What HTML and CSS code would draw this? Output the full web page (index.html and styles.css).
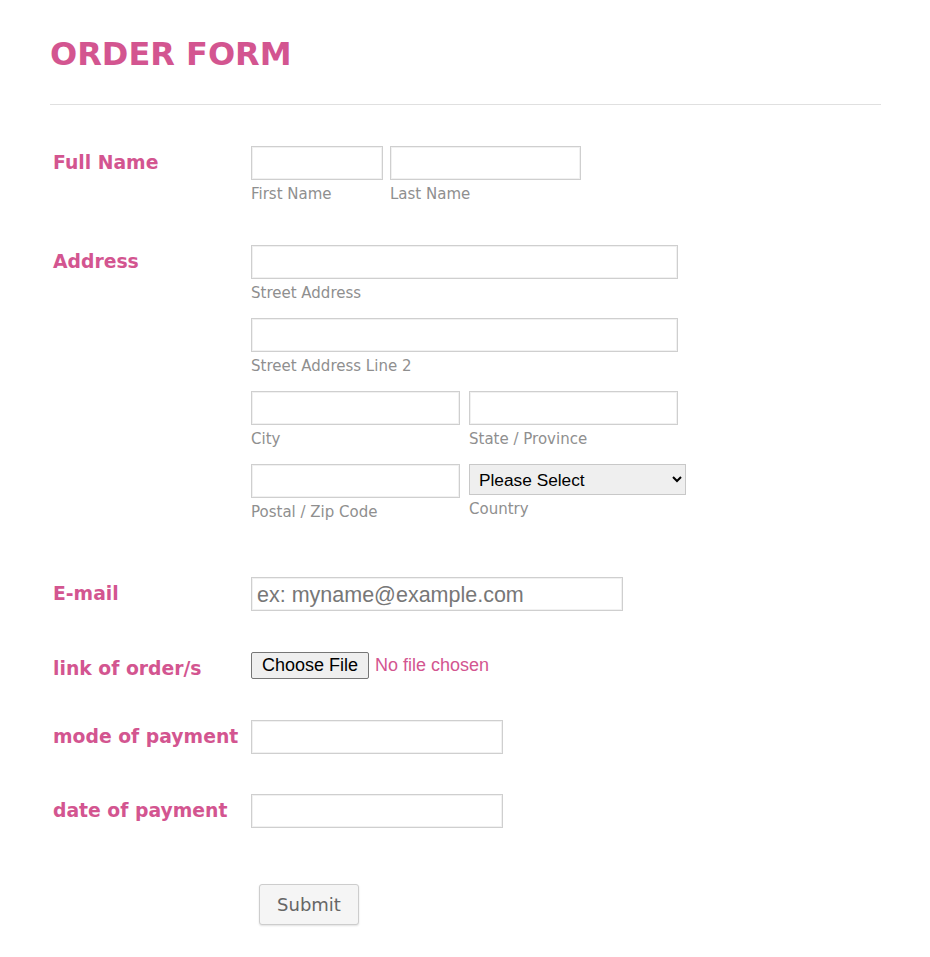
FILE: index.html
```html
<!DOCTYPE html>
<html lang="en">
<head>
  <meta charset="UTF-8" />
  <title>Order Form</title>
  <link rel="stylesheet" href="styles.css">
</head>
<body>
  <form class="form-all">
    <h1 class="form-header">ORDER FORM</h1>
    <hr class="form-divider">

    <div class="form-line name-line">
      <label class="form-label">Full Name</label>
      <div class="form-input">
        <div class="field-row">
          <span class="field">
            <input type="text" class="w-first">
            <span class="sublabel">First Name</span>
          </span>
          <span class="field">
            <input type="text" class="w-last">
            <span class="sublabel">Last Name</span>
          </span>
        </div>
      </div>
    </div>

    <div class="form-line">
      <label class="form-label">Address</label>
      <div class="form-input">
        <div class="field stacked">
          <input type="text" class="w-street">
          <span class="sublabel">Street Address</span>
        </div>
        <div class="field stacked">
          <input type="text" class="w-street">
          <span class="sublabel">Street Address Line 2</span>
        </div>
        <div class="field-row wide">
          <span class="field stacked">
            <input type="text" class="w-half">
            <span class="sublabel">City</span>
          </span>
          <span class="field stacked">
            <input type="text" class="w-half">
            <span class="sublabel">State / Province</span>
          </span>
        </div>
        <div class="field-row wide">
          <span class="field stacked">
            <input type="text" class="w-half">
            <span class="sublabel">Postal / Zip Code</span>
          </span>
          <span class="field stacked">
            <select class="country">
              <option>Please Select</option>
            </select>
            <span class="sublabel">Country</span>
          </span>
        </div>
      </div>
    </div>

    <div class="form-line email-line">
      <label class="form-label">E-mail</label>
      <div class="form-input">
        <input type="email" class="w-email" placeholder="ex: myname@example.com">
      </div>
    </div>

    <div class="form-line file-line">
      <label class="form-label">link of order/s</label>
      <div class="form-input">
        <input type="file" class="file-input">
      </div>
    </div>

    <div class="form-line">
      <label class="form-label">mode of payment</label>
      <div class="form-input">
        <input type="text" class="w-short">
      </div>
    </div>

    <div class="form-line">
      <label class="form-label">date of payment</label>
      <div class="form-input">
        <input type="text" class="w-short">
      </div>
    </div>

    <div class="form-line buttons">
      <span></span>
      <div class="form-input">
        <button type="button" class="submit">Submit</button>
      </div>
    </div>
  </form>
</body>
</html>
```

FILE: styles.css
```css
* {
  box-sizing: border-box;
}

body {
  margin: 0;
  background: #fff;
  font-family: "DejaVu Sans", Verdana, sans-serif;
  color: #d35590;
}

.form-all {
  width: 831px;
  margin-left: 50px;
  padding-top: 35px;
}

.form-header {
  margin: 0;
  font-size: 32px;
  font-weight: bold;
  line-height: 38px;
  color: #d35590;
}

.form-divider {
  border: 0;
  border-top: 1px solid #e0e0e0;
  margin: 31px 0 41px;
}

.form-line {
  display: grid;
  grid-template-columns: 201px 1fr;
  margin-bottom: 40px;
}

.name-line {
  margin-bottom: 42px;
}

.email-line {
  margin-bottom: 41px;
}

.file-line {
  margin-bottom: 34px;
}

.form-label {
  padding-left: 3px;
  font-size: 18.8px;
  font-weight: bold;
  line-height: 34px;
  white-space: nowrap;
}

.field-row {
  display: flex;
  gap: 7px;
}

.field-row.wide {
  gap: 9px;
}

.field {
  display: flex;
  flex-direction: column;
}

.stacked {
  margin-bottom: 16px;
}

input[type="text"],
input[type="email"] {
  height: 34px;
  border: 1px solid #cfcfcf;
  box-shadow: inset 0 0 0 1px #f1f1f1;
  background: #fff;
  padding: 2px 5px 0;
  font-family: "Liberation Sans", Arial, sans-serif;
  font-size: 21.5px;
  color: #333;
  outline: none;
}

input::placeholder {
  color: #777;
}

.sublabel {
  margin-top: 5px;
  font-size: 15px;
  line-height: 18px;
  color: #8f8f8f;
}

.w-first { width: 132px; }
.w-last { width: 191px; }
.w-street { width: 427px; }
.w-half { width: 209px; }
.w-email { width: 372px; }
.w-short { width: 252px; }

.country {
  width: 217px;
  height: 31px;
  border: 1px solid #c8c8c8;
  border-radius: 0;
  background: #efefef;
  padding: 0 4px 0 5px;
  font-family: "Liberation Sans", Arial, sans-serif;
  font-size: 17.3px;
  color: #000;
}

.file-input {
  font-family: "Liberation Sans", Arial, sans-serif;
  font-size: 18px;
  color: #d35590;
}

.file-input::file-selector-button {
  height: 27px;
  margin-right: 6px;
  padding: 0 10px;
  border: 1px solid #767676;
  border-radius: 2px;
  background: #efefef;
  font-family: "Liberation Sans", Arial, sans-serif;
  font-size: 18px;
  color: #000;
}

.form-line.buttons {
  margin-top: 56px;
}

.submit {
  margin-left: 8px;
  width: 100px;
  height: 41px;
  border: 1px solid #cdcdcd;
  border-radius: 3px;
  background: #f5f5f5;
  box-shadow: 0 1px 2px rgba(0, 0, 0, 0.12);
  font-family: "DejaVu Sans", Verdana, sans-serif;
  font-size: 18px;
  color: #666;
}
```
